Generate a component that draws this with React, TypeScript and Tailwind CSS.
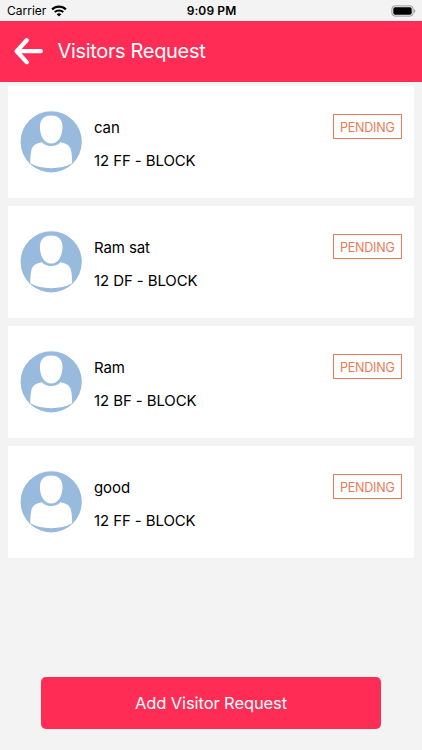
const visitors = [
  { name: "can", flat: "12 FF - BLOCK" },
  { name: "Ram sat", flat: "12 DF - BLOCK" },
  { name: "Ram", flat: "12 BF - BLOCK" },
  { name: "good", flat: "12 FF - BLOCK" },
];

function StatusBar() {
  return (
    <div className="grid h-[21px] shrink-0 grid-cols-3 items-center pr-[6px] pl-[7px] text-black">
      <div className="flex items-center gap-[5px]">
        <span className="text-[12px] leading-[21px]">Carrier</span>
        <svg width="16" height="12" viewBox="0 0 16 12" fill="none">
          <path d="M1.1 4.4C4.9.7 11.1.7 14.9 4.4" stroke="#000" strokeWidth="2.2" />
          <path d="M3.7 7.1C6.1 4.9 9.9 4.9 12.3 7.1" stroke="#000" strokeWidth="2" />
          <path d="M8 11.5 5.7 9.2C7 8 9 8 10.3 9.2Z" fill="#000" />
        </svg>
      </div>
      <span className="text-center text-[12px] leading-[21px] font-semibold tracking-[0.1px]">9:09 PM</span>
      <svg className="justify-self-end" width="25" height="12" viewBox="0 0 25 12">
        <rect x="0.9" y="0.9" width="21.2" height="10.2" rx="3" fill="none" stroke="#999" strokeWidth="1" />
        <rect x="2.3" y="2.3" width="18.4" height="7.4" rx="1.7" fill="#000" />
        <path d="M23.2 4.2C24.6 4.7 24.6 7.3 23.2 7.8Z" fill="#888" />
      </svg>
    </div>
  );
}

function Avatar() {
  return (
    <svg className="shrink-0" width="62" height="62" viewBox="0 0 62 62">
      <circle cx="31.2" cy="30.8" r="30.6" fill="#97badd" />
      <path d="M31.2 4.6C38.6 4.6 42.5 9 42.5 15.8C42.5 24.8 38.4 32.6 31.2 32.6C24 32.6 19.9 24.8 19.9 15.8C19.9 9 23.8 4.6 31.2 4.6Z" fill="#fff" />
      <path d="M22 31.2C24.2 33.8 27.2 35 31.2 35C35.2 35 38.2 33.8 40.4 31.2C46.4 32.3 49.8 34.2 51 39C51.8 42.6 52.2 47.6 52.2 52.3C46.2 55.6 39.2 57.2 31.2 57.2C23.2 57.2 16.2 55.6 10.2 52.3C10.2 47.6 10.6 42.6 11.4 39C12.6 34.2 16 32.3 22 31.2Z" fill="#fff" />
    </svg>
  );
}

export default function App() {
  return (
    <div className="flex h-[750px] w-[422px] flex-col overflow-hidden bg-[#f3f3f3] font-['Inter',sans-serif]">
      <StatusBar />
      <header className="flex h-[60.5px] shrink-0 items-center bg-[#ff2d55] pl-[14px] text-white">
        <svg width="30" height="28" viewBox="0 0 30 28" fill="none" stroke="#fff" strokeWidth="4.3" strokeLinecap="round" strokeLinejoin="round">
          <path d="M26.8 14.2H3M12.7 3.3 2.7 14.2l10 10.9" />
        </svg>
        <h1 className="ml-[13.5px] text-[20px] leading-6 tracking-[-0.33px]">Visitors Request</h1>
      </header>
      <main className="flex flex-col gap-2 pt-[4.5px] pr-[8.5px] pl-2">
        {visitors.map((v, i) => (
          <article key={i} className="flex h-28 items-center bg-white pr-3 pl-3">
            <Avatar />
            <div className="ml-3 flex flex-1 flex-col gap-[13.5px] pt-[4.5px] text-[15px] leading-5 text-black">
              <span className="tracking-[-0.1px]">{v.name}</span>
              <span className="tracking-[-0.1px]">{v.flat}</span>
            </div>
            <span className="mt-[28px] flex h-[25px] w-[68.5px] items-center justify-center self-start border border-[#ed7a55] pt-[3px] text-[12.5px] tracking-[-0.2px] text-[#ed7a55]">
              PENDING
            </span>
          </article>
        ))}
      </main>
      <button className="mx-[41px] mt-auto mb-[21px] h-[52.5px] shrink-0 rounded-[5px] bg-[#ff2d55] pt-[2px] text-[16.5px] tracking-[-0.1px] text-white">
        Add Visitor Request
      </button>
    </div>
  );
}
